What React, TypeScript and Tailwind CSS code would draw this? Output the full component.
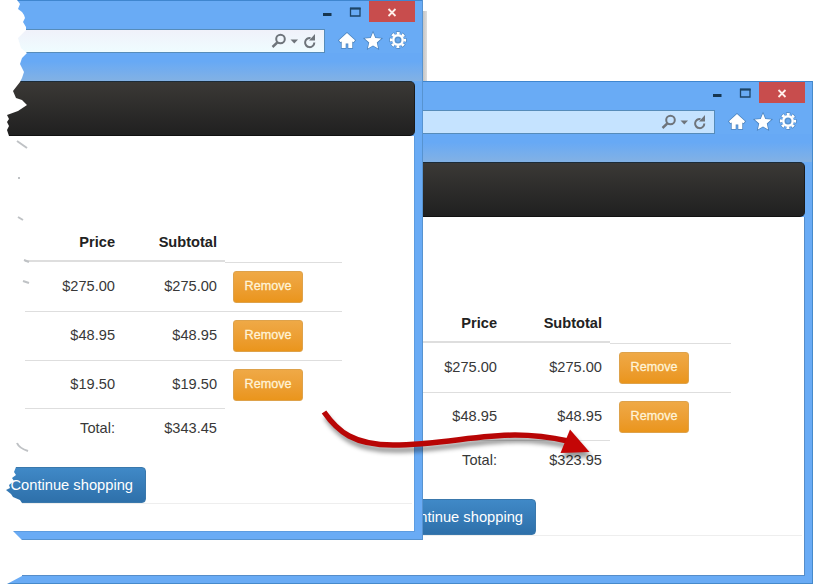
import React from "react";

function Toolbar({ tint }: { tint: string }) {
  return (
    <>
      <div className="flex h-[28px] shrink-0 justify-end border-t border-[#3f86cf] pr-[7px]">
        <svg width="46" height="24" viewBox="0 0 46 24" className="shrink-0">
          <rect x="0" y="12" width="8.500" height="3" fill="#173650" />
          <path d="M27.500 7.500h9.500v7.500h-9.500z" fill="none" stroke="#1d4467" strokeWidth="1.300" />
          <path d="M27 7.500h10.600" stroke="#1d4467" strokeWidth="2" />
        </svg>
        <div className="flex h-[21px] w-[46px] items-center justify-center bg-[#c84d4d]">
          <svg width="10" height="10" viewBox="0 0 10 10">
            <path d="M1.500 2l7 7M8.500 2l-7 7" stroke="#ffeeea" strokeWidth="1.800" />
          </svg>
        </div>
      </div>
      <div className="mt-px flex h-[24px] shrink-0">
        <div className={`flex grow items-center justify-end border-y border-r border-[#568cba] pr-[3px] ${tint}`}>
          <svg width="52" height="20" viewBox="-1 0 52 20" fill="none" stroke="#6e747b">
            <circle cx="10.500" cy="8" r="4.300" strokeWidth="2" />
            <path d="M7.300 11.500L2.500 16" strokeWidth="2.400" />
            <path d="M20.500 8.500h7.500l-3.750 4z" fill="#6e747b" stroke="none" />
            <path d="M40.500 7A4.600 4.600 0 1 0 44.300 11.500" strokeWidth="2" />
            <path d="M45 3v6.500h-6z" fill="#6e747b" stroke="none" />
          </svg>
        </div>
        <svg width="97" height="24" viewBox="0 0 97 24" className="shrink-0">
          <g fill="#fff" stroke="#4b83bd" strokeWidth="1.500" paintOrder="stroke">
            <path d="M22 4l8 7.300-1.500 1.900-1.200-.6V19h-4v-4.500h-2.600V19h-4v-6.400l-1.200.6-1.500-1.900z" />
            <path d="M48 3.600l2.300 5.400 6 .6-4.500 4 1.300 5.800-5.100-3-5.100 3 1.300-5.800-4.500-4 6-.6z" />
          </g>
          <circle cx="73" cy="11" r="6.800" fill="none" stroke="#4b83bd" strokeWidth="3.800" strokeDasharray="3.900 1.441" strokeDashoffset="1.950" />
          <circle cx="73" cy="11" r="6.800" fill="none" stroke="#fff" strokeWidth="2.600" strokeDasharray="2.900 2.441" strokeDashoffset="1.450" />
          <circle cx="73" cy="11" r="4.700" fill="#5692cf" stroke="#fff" strokeWidth="2.400" />
          <circle cx="73" cy="11" r="2" fill="#69a9ee" />
        </svg>
      </div>
      <div className="h-[28px] shrink-0 bg-linear-to-b from-[#67a9f5] from-30% to-[#82b1e4]" />
      <div className="mr-[7px] h-[55px] shrink-0 rounded-r-[5px] border-y border-r border-t-[#1b2b38] border-r-[#1b1b1b] border-b-[#111] bg-linear-to-b from-[#3b3936] to-[#202020]" />
    </>
  );
}

function RemoveButton() {
  return (
    <button className="h-[32px] w-[70px] rounded-[3px] border border-[#dea24b] bg-linear-to-b from-[#efa946] to-[#ea951b] pb-[2px] text-[12.6px] text-[#fff3d7] [-webkit-text-stroke:0.3px_#fff3d7]">
      Remove
    </button>
  );
}

type CartProps = {
  rows: string[];
  total: string;
  left: string;
  price: string;
  subtotal: string;
  actions: string;
  action: string;
};

function Cart({ rows, total, left, price, subtotal, actions, action }: CartProps) {
  return (
    <div className="flex pt-[86px] text-right text-[14.6px] text-[#383838]">
      <div className={left}>
        <div className="flex h-[40px] items-center border-b-2 border-[#dedede] pt-1 font-bold text-[#222]">
          <span className={price}>Price</span>
          <span className={subtotal}>Subtotal</span>
        </div>
        {rows.map((amount, i) => (
          <div
            key={amount}
            className={`flex items-center border-b border-[#dedede] ${
              i === 0 ? "h-[50px] pt-px" : i === rows.length - 1 ? "h-[48px]" : "h-[49px]"
            }`}
          >
            <span className={price}>{amount}</span>
            <span className={subtotal}>{amount}</span>
          </div>
        ))}
        <div className="flex h-[36px] items-center pt-[3px]">
          <span className={price}>Total:</span>
          <span className={subtotal}>{total}</span>
        </div>
      </div>
      <div className={actions}>
        <div className="h-[40px] border-b border-[#dedede]" />
        {rows.map((amount, i) => (
          <div
            key={amount}
            className={`flex h-[49px] items-center border-b ${action} ${
              i === rows.length - 1 ? "border-transparent" : "border-[#dedede]"
            }`}
          >
            <RemoveButton />
          </div>
        ))}
      </div>
    </div>
  );
}

export default function App() {
  return (
    <div className="relative h-[584px] w-[813px] overflow-hidden bg-white font-['Liberation_Sans',Arial,sans-serif]">
      <div className="absolute top-[11px] left-[423px] h-[71px] w-[4px] bg-linear-to-r from-[#c4c4c4] to-[#dedede]" />

      {/* Window after the item was removed */}
      <section className="absolute top-[81px] left-0 flex h-[503px] w-[813px] flex-col border-r border-b border-[#468acb] bg-[#69abf5]">
        <Toolbar tint="bg-[#c5e3ff]" />
        <div className="mr-[7px] mb-[7px] grow border-r border-b border-[#568dc9] bg-white">
          <Cart
            rows={["$275.00", "$48.95"]}
            total="$323.95"
            left="w-[610px]"
            price="w-[497px]"
            subtotal="w-[105px]"
            actions="mt-px w-[121px]"
            action="pl-[9px]"
          />
          <div className="mt-[22px] flex">
            <button className="h-[36px] w-[536px] rounded-[4px] border border-[#3a78ac] bg-linear-to-b from-[#4089c7] to-[#2e70aa] pr-[12px] text-right text-[14.7px] text-white">
              Continue shopping
            </button>
          </div>
          <div className="mr-[2px] h-px bg-[#eee]" />
        </div>
      </section>

      {/* Window before the item was removed */}
      <section className="absolute top-0 left-0 flex h-[540px] w-[423px] flex-col border-r border-b border-[#5793d0] bg-[#69abf5]">
        <Toolbar tint="bg-linear-to-b from-[#f0f1fa] to-[#effcff]" />
        <div className="mr-[7px] mb-[7px] grow border-r border-b border-[#5d9ce0] bg-white">
          <Cart
            rows={["$275.00", "$48.95", "$19.50"]}
            total="$343.45"
            left="ml-[25px] w-[200px]"
            price="w-[90px]"
            subtotal="w-[102px]"
            actions="mt-px w-[117px]"
            action="pl-[8px]"
          />
          <div className="mt-[22px] flex">
            <button className="h-[36px] w-[146px] rounded-[4px] border border-[#3a78ac] bg-linear-to-b from-[#4089c7] to-[#2e70aa] pr-[12px] text-right text-[14.7px] whitespace-nowrap text-white">
              Continue shopping
            </button>
          </div>
          <div className="mr-[2px] ml-[20px] h-px bg-[#eee]" />
        </div>
      </section>

      {/* Torn paper edge */}
      <svg className="pointer-events-none absolute top-0 left-0" width="40" height="584" viewBox="0 0 40 584">
        <path
          fill="#fff"
          d="M0 0H17L20 4 18 9 22 12 24 15 25 18 23 22 26 27V30L18 38 21 48 27 53 22 58 20 64 24 72 22 78 20 82 13 91 16 98 22 100 27 105 18 111 7 115 9 119 7 122 9 126 7 130 9 136 20 139V467H16L14 472 16 475 12 478 14 481 9 485 10 488 6 490 11 494 13 497 20 500 22 503V531H13L22 540V576L7 584H0Z"
        />
        <g stroke="#bfc2c5" strokeWidth="2" fill="none">
          <path d="M17 141l10 7M18 178h2M18 217l5 3M24 260l5 2M23 281l6 2M17 443q2 5 11 8" />
        </g>
      </svg>

      {/* Arrow linking the two totals */}
      <svg
        className="pointer-events-none absolute top-0 left-0 drop-shadow-[2px_5px_2px_rgba(0,0,0,0.4)]"
        width="813"
        height="584"
        viewBox="0 0 813 584"
      >
        <path
          d="M324 412C338 432 354 445 393 445C440 445 475 435 515 435C535 435 550 437 568 441"
          fill="none"
          stroke="#b80505"
          strokeWidth="5.500"
        />
        <path d="M570 429.500L589.500 452 560.500 453Z" fill="#c40606" />
      </svg>
    </div>
  );
}
